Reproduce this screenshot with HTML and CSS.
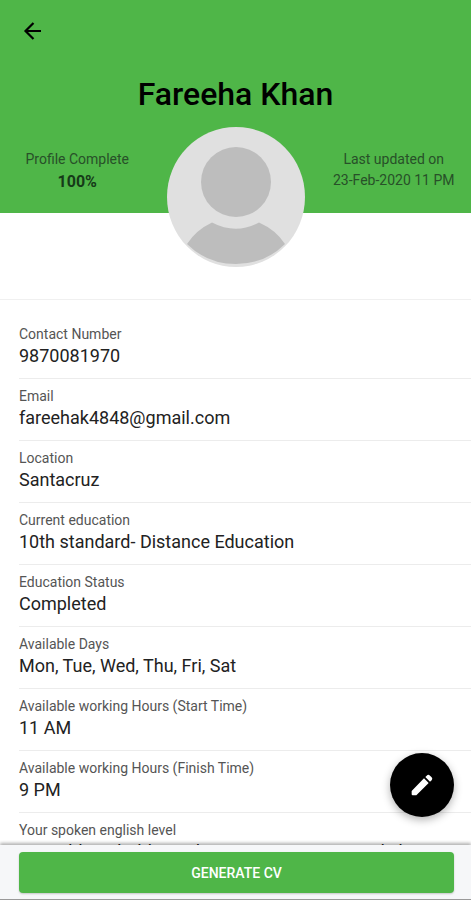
FILE: index.html
```html
<!DOCTYPE html>
<html lang="en">
<head>
    <meta charset="UTF-8">
    <meta name="viewport" content="width=device-width, initial-scale=1.0">
    <title>Profile</title>
    <link rel="stylesheet" href="styles.css">
</head>
<body>
    <div class="app">
        <main class="content">
            <header class="profile">
                <div class="toolbar">
                    <button class="back" type="button" aria-label="Back">
                        <svg viewBox="0 0 24 24" width="24" height="24">
                            <path d="M20 12H4.5M12.5 4L4.5 12l8 8" fill="none" stroke="#000" stroke-width="2.2"/>
                        </svg>
                    </button>
                </div>
                <h1>Fareeha Khan</h1>
                <div class="summary">
                    <div class="stat">
                        <p>Profile Complete</p>
                        <p class="percent">100%</p>
                    </div>
                    <svg class="avatar" viewBox="0 0 138 140" role="img" aria-label="Profile photo">
                        <ellipse cx="69" cy="70" rx="69" ry="70" fill="#e0e0e0"/>
                        <path d="M20 117Q29 103 45 95.500Q69 108 92 95.500Q109 103 118 117Q98 137 69 137Q40 137 20 117z" fill="#bdbdbd"/>
                        <circle cx="69" cy="55" r="35" fill="#bdbdbd"/>
                    </svg>
                    <div class="stat">
                        <p>Last updated on</p>
                        <p>23-Feb-2020 11 PM</p>
                    </div>
                </div>
            </header>

            <dl class="details">
                <div class="item"><dt>Contact Number</dt><dd>9870081970</dd></div>
                <div class="item"><dt>Email</dt><dd>fareehak4848@gmail.com</dd></div>
                <div class="item"><dt>Location</dt><dd>Santacruz</dd></div>
                <div class="item"><dt>Current education</dt><dd>10th standard- Distance Education</dd></div>
                <div class="item"><dt>Education Status</dt><dd>Completed</dd></div>
                <div class="item"><dt>Available Days</dt><dd>Mon, Tue, Wed, Thu, Fri, Sat</dd></div>
                <div class="item"><dt>Available working Hours (Start Time)</dt><dd>11 AM</dd></div>
                <div class="item"><dt>Available working Hours (Finish Time)</dt><dd>9 PM</dd></div>
                <div class="item"><dt>Your spoken english level</dt><dd>I am able to hold simple conversations in English</dd></div>
            </dl>
        </main>

        <footer class="footer">
            <button class="fab" type="button" aria-label="Edit profile">
                <svg viewBox="0 0 66 66" width="22" height="22">
                    <path d="M2 51L39 13L53 27L16 64H5Q2 64 2 61zM43 9L47 5Q52 0 57 5L62 10Q66 14 62 19L57 23z" fill="#fff"/>
                </svg>
            </button>
            <button class="generate" type="button">GENERATE CV</button>
        </footer>
    </div>
</body>
</html>
```
FILE: styles.css
```css
* {
    box-sizing: border-box;
}

body {
    margin: 0;
    font-family: Roboto, "Liberation Sans", sans-serif;
    background-color: #fff;
    color: #222;
}

h1, p, dl, dd {
    margin: 0;
}

button {
    border: none;
    padding: 0;
    font-family: inherit;
    cursor: pointer;
}

.app {
    display: flex;
    flex-direction: column;
    height: 100vh;
}

.content {
    flex: 1;
    min-height: 0;
    overflow-y: auto;
    scrollbar-width: none;
}

/* green band stops behind the middle of the avatar */
.profile {
    background: linear-gradient(#4fb648, #4fb648) no-repeat 0 0 / 100% 213px;
    border-bottom: 1px solid #f0f0f0;
    padding-bottom: 32px;
}

.toolbar {
    padding: 19px 21px 0;
}

.back {
    display: block;
    width: 24px;
    height: 24px;
    background: none;
}

.profile h1 {
    margin-top: 31px;
    font-size: 32px;
    line-height: 40px;
    font-weight: 500;
    text-align: center;
    color: #000;
}

.summary {
    display: grid;
    grid-template-columns: 1fr 138px 1fr;
    column-gap: 12px;
    padding: 13px 0 0;
}

.avatar {
    display: block;
    width: 138px;
    height: 140px;
}

.stat {
    padding-top: 22px;
    text-align: center;
    font-size: 14px;
    line-height: 21px;
    color: #285029;
}

.percent {
    font-size: 16px;
    line-height: 24px;
    font-weight: 700;
    color: #163a18;
}

.details {
    padding: 17px 0 16px 19px;
}

.item {
    height: 62px;
    padding: 8px 0 9px;
    border-bottom: 1px solid #ececec;
}

.item dt {
    font-size: 14px;
    line-height: 18px;
    color: #555;
}

.item dd {
    font-size: 18px;
    line-height: 26px;
    white-space: nowrap;
}

.footer {
    position: relative;
    padding: 7px 17px 6px 19px;
    background-color: #f6f7f9;
    border-bottom: 1px solid #999;
    box-shadow: 0 -2px 3px rgba(0, 0, 0, 0.3);
}

.generate {
    display: block;
    width: 100%;
    height: 41px;
    border-radius: 4px;
    background-color: #4fb648;
    color: #fff;
    font-size: 14px;
    font-weight: 500;
    box-shadow: 0 1px 2px rgba(0, 0, 0, 0.2);
}

.fab {
    position: absolute;
    right: 17px;
    bottom: 82px;
    display: flex;
    align-items: center;
    justify-content: center;
    width: 64px;
    height: 64px;
    border-radius: 50%;
    background-color: #000;
    box-shadow: 0 3px 8px rgba(0, 0, 0, 0.3);
}
```
